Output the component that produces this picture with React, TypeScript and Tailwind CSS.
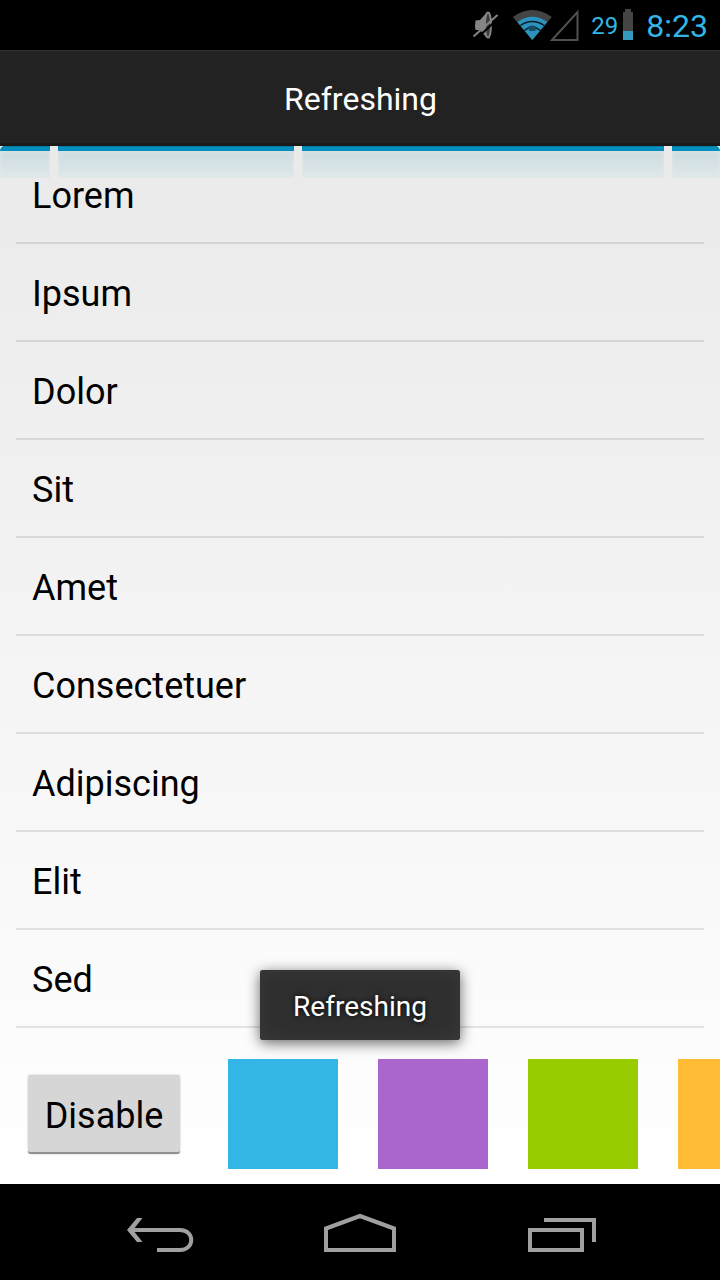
const items = ['Lorem', 'Ipsum', 'Dolor', 'Sit', 'Amet', 'Consectetuer', 'Adipiscing', 'Elit', 'Sed'];
const swatches = ['bg-[#33b5e5]', 'bg-[#aa66cc]', 'bg-[#99cc00]', 'bg-[#ffbb33]'];
const segments = ['w-[50px] rounded-tl-[5px]', 'w-[236px]', 'w-[362px]', 'w-12 rounded-tr-[5px]'];

function StatusBar() {
  return (
    <header className="flex h-[50px] shrink-0 justify-end bg-black text-[#33b5e5]">
      <svg width="116" height="50" viewBox="0 0 116 50" className="mr-[10px]">
        <path d="M10.500 20.500L15 20L20.500 14L24.500 12V38.500L20.500 36.500L15 30H10.500Q9.500 26 10.500 20.500z" fill="#858585" />
        <ellipse cx="23" cy="25" rx="3" ry="12.500" fill="#3a3a3a" stroke="#858585" strokeWidth="1.800" />
        <path d="M11 39L35 17" stroke="#000" strokeWidth="2" />
        <path d="M8.500 36.500L32.500 15" stroke="#858585" strokeWidth="2" />
        <g transform="translate(-.7 0)">
          <path d="M68 40L48.500 17Q68 3 87.500 17z" fill="#444" />
          <path d="M68 40L53 22Q68 11.500 83 22z" fill="#2b93bd" />
          <path d="M56 25.500Q68 17.500 80 25.500M60 30.500Q68 24 76 30.500" fill="none" stroke="#0a1d25" strokeWidth="1.500" />
          <path d="M64 26.500q4-2 8 0l-1 4.500h-6z" fill="#174d63" />
          <path d="M64 33l4-1.500 4 1.500-4 5z" fill="#2b93bd" />
        </g>
        <path d="M87 40L112.500 12V40z" fill="none" stroke="#505050" strokeWidth="2" />
      </svg>
      <span className="mt-[11px] text-[24px] leading-[30px]">29</span>
      <svg width="12" height="50" className="ml-[4px] mr-[12px]">
        <path d="M3 9h6v3h2v19H1V12h2z" fill="#444" />
        <path d="M1 31h10v9H1z" fill="#3598bc" />
      </svg>
      <span className="mr-[12px] mt-[6px] text-[32px] leading-[40px]">8:23</span>
    </header>
  );
}

function RefreshBar() {
  return (
    <div className="absolute inset-x-0 top-0 flex h-8 gap-2 overflow-hidden">
      {segments.map((s) => (
        <div key={s} className={`${s} shrink-0 overflow-hidden bg-gradient-to-b from-[#c9dade] to-[#e0e8ea]`}>
          <div className="h-[5px] border-t border-[#087da5] bg-[#058fbe]" />
          <div className="-mb-2 h-[35px] shadow-[inset_0_0_4px_#e6e8e9]" />
        </div>
      ))}
    </div>
  );
}

function NavBar() {
  return (
    <nav className="flex h-24 shrink-0 bg-black">
      <svg width="720" height="96" viewBox="0 1184 720 96" fill="none" stroke="#a0a0a0" strokeWidth="4">
        <path d="M130 1230H180C195 1230 195 1250 180 1250H157" />
        <path d="M137 1218H142.500L133 1230L142.500 1242H137L127 1230z" fill="#a0a0a0" stroke="none" />
        <path d="M326 1250V1228.500L360 1216L394 1228.500V1250z" />
        <path d="M530 1230H582V1250H530zM544 1220H594V1242" />
      </svg>
    </nav>
  );
}

export default function App() {
  return (
    <div className="relative flex h-[1280px] w-[720px] flex-col overflow-hidden bg-black font-[Roboto,sans-serif]">
      <StatusBar />
      <div className="flex h-24 shrink-0 items-center justify-center border-t border-b-[3px] border-t-[#303030] border-b-[#1a1a1a] bg-[#222] text-[32px] text-white">
        <h1 className="pl-px pt-[3px]">Refreshing</h1>
      </div>
      <main className="relative flex h-[1038px] shrink-0 flex-col bg-gradient-to-b from-[#eaeaea] to-white">
        <RefreshBar />
        <ul className="relative px-4">
          {items.map((item) => (
            <li key={item} className="flex h-[98px] items-center border-b-2 border-black/10 px-4 pt-[3px] text-[36px] text-black">
              {item}
            </li>
          ))}
        </ul>
        <div className="flex h-[156px] items-center overflow-hidden pl-7 pt-4">
          <button className="mr-12 h-[79px] w-[152px] shrink-0 rounded-[3px] border-b-2 border-[#929292] bg-[#d6d6d6] pt-[6px] text-[36px] text-black shadow-[0_0_2px_#bbb]">
            Disable
          </button>
          <div className="flex gap-10">
            {swatches.map((s) => (
              <div key={s} className={`${s} size-[110px] shrink-0`} />
            ))}
          </div>
        </div>
      </main>
      <NavBar />
      <div className="absolute left-[260px] top-[970px] flex h-[70px] w-[200px] items-center justify-center rounded-[3px] bg-[#2f2f2f] pt-[3px] text-[28px] text-white shadow-[0_3px_14px_rgba(0,0,0,0.6),inset_0_0_18px_#3b3b3b] [text-shadow:0_0_5px_#000]">
        Refreshing
      </div>
    </div>
  );
}
